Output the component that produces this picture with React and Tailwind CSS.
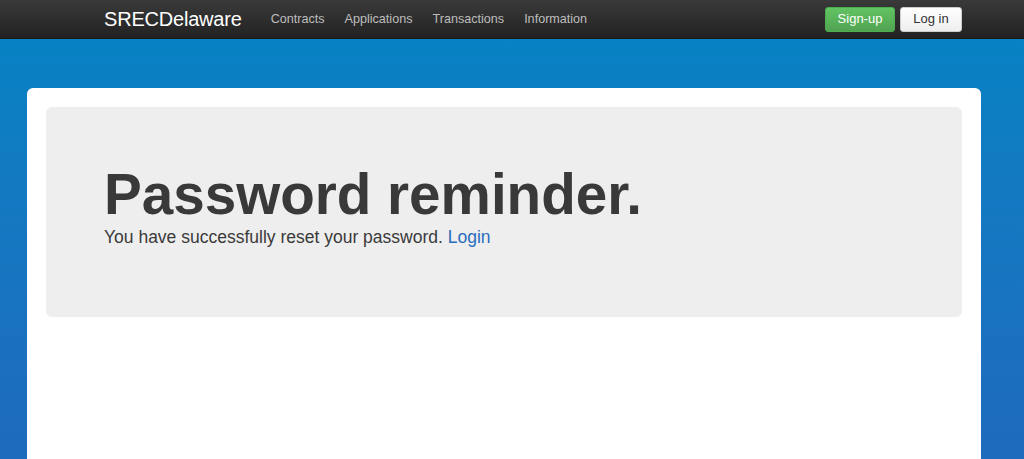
export default function App() {
  return (
    <div
      className="h-[459px] w-[1024px] overflow-hidden bg-gradient-to-b from-[#0384c4] to-[#1e6abd]"
      style={{ fontFamily: '"Liberation Sans", Arial, sans-serif' }}
    >
      <nav className="flex h-[39px] items-center border-b border-[#1a1a1a] bg-gradient-to-b from-[#3a3a3a] to-[#222222]">
        <div className="ml-[104px] text-[20px] leading-none tracking-[-0.2px] text-white">SRECDelaware</div>
        <div className="ml-[29px] flex items-center gap-[20px] text-[12.6px] text-[#bdbdbd]">
          <span>Contracts</span>
          <span>Applications</span>
          <span>Transactions</span>
          <span>Information</span>
        </div>
        <div className="ml-auto mr-[62px] flex items-center gap-[5px]">
          <button className="h-[25px] w-[70px] rounded-[3px] border border-[#4cae4c] bg-gradient-to-b from-[#62c462] to-[#51a351] text-[13px] text-white">
            Sign-up
          </button>
          <button className="h-[25px] w-[62px] rounded-[3px] border border-[#cccccc] bg-gradient-to-b from-white to-[#eeeeee] text-[13px] text-[#333]">
            Log in
          </button>
        </div>
      </nav>
      <div className="ml-[27px] mt-[49px] h-[400px] w-[954px] rounded-[6px] bg-white px-[19px] pt-[19px]">
        <div className="h-[210px] rounded-[6px] bg-[#eeeeee] pl-[58px] pt-[55px]">
          <h1 className="text-[56.6px] font-bold leading-[66px] text-[#393939]">Password reminder.</h1>
          <p className="-mt-[2px] text-[17.5px] leading-[22px] text-[#3a3a3a]">
            You have successfully reset your password. <span className="text-[#2a6dbd]">Login</span>
          </p>
        </div>
      </div>
    </div>
  );
}
